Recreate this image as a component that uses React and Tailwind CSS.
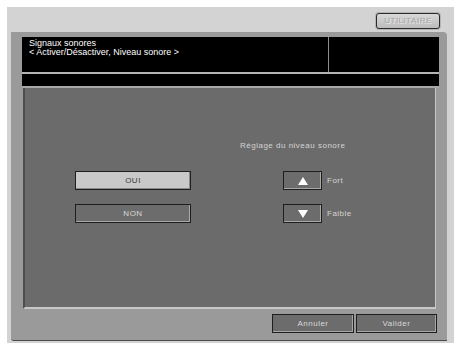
import React from "react";

const pixelFont = { fontFamily: '"Liberation Sans", Arial, sans-serif' };

const FlatButton = ({ children, light, className = "" }) => (
  <div
    className={
      "flex items-center justify-center border border-[#1e1e1e] text-[8px] tracking-[0.5px] " +
      (light
        ? "bg-[#c9c9c9] text-[#3a3a3a] shadow-[inset_-1px_-1px_0_#8a8a8a] "
        : "bg-[#6c6c6c] text-[#d8d8d8] shadow-[inset_-1px_-1px_0_#a8a8a8] ") +
      className
    }
  >
    {children}
  </div>
);

const ArrowButton = ({ up, label }) => (
  <div className="flex items-center gap-[5px]">
    <div className="flex h-[19px] w-[39px] items-center justify-center border border-[#1e1e1e] bg-[#6c6c6c] shadow-[inset_-1px_-1px_0_#a8a8a8]">
      <svg width="10" height="8" viewBox="0 0 10 8">
        <polygon points={up ? "5,0 10,8 0,8" : "0,0 10,0 5,8"} fill="#ffffff" />
      </svg>
    </div>
    <span className="text-[8px] tracking-[0.5px] text-[#d4d4d4]">{label}</span>
  </div>
);

export default function App() {
  return (
    <div className="h-[343px] w-[454px] bg-white pl-[7px] pt-[7px]" style={pixelFont}>
      <div className="flex h-[336px] w-[447px] flex-col bg-[#d3d3d3]">
        {/* top bar */}
        <div className="flex h-[25px] justify-end pr-[13px] pt-[5px]">
          <div className="h-[18px] w-[66px] rounded-[4px] bg-[#b4b4b4] p-[1px]">
            <div className="flex h-full w-full items-center justify-center rounded-[3px] border border-[#2a2a2a] bg-gradient-to-b from-[#d8d8d8] to-[#bcbcbc] text-[8px] tracking-[0.5px] text-[#a4a4a4] [text-shadow:1px_1px_0_#e8e8e8]">
              UTILITAIRE
            </div>
          </div>
        </div>

        {/* main panel */}
        <div className="ml-[4px] mr-[7px] flex h-[309px] flex-col rounded-tr-[4px] rounded-bl-[3px] border-b border-[#4a4a4a] bg-[#9a9a9a] pl-[11px] pr-[8px] pt-[5px]">
          {/* header */}
          <div className="flex h-[35px] bg-black">
            <div className="flex-1 border-r border-[#8c8c8c] pl-[7px] pt-[2px] text-[9px] leading-[9px] text-white">
              <div>Signaux sonores</div>
              <div>&lt; Activer/Désactiver, Niveau sonore &gt;</div>
            </div>
            <div className="w-[110px]" />
          </div>
          <div className="h-[2px] bg-[#b4b4b4]" />
          <div className="h-[12px] bg-black" />
          <div className="h-[2px] bg-[#a8a8a8]" />

          {/* content */}
          <div className="ml-[1px] mr-[3px] flex h-[221px] flex-col border-b-2 border-l-2 border-r border-b-[#c8c8c8] border-l-[#4e4e4e] border-r-[#c8c8c8] bg-[#6b6b6b] pt-[52px]">
            <div className="pl-[215px] text-[8px] tracking-[0.5px] text-[#d4d4d4]">
              Réglage du niveau sonore
            </div>
            <div className="mt-[19px] flex">
              <div className="ml-[50px] flex w-[116px] flex-col gap-[14px]">
                <FlatButton light className="h-[19px]">OUI</FlatButton>
                <FlatButton className="h-[19px]">NON</FlatButton>
              </div>
              <div className="ml-[92px] flex flex-col gap-[14px]">
                <ArrowButton up label="Fort" />
                <ArrowButton label="Faible" />
              </div>
            </div>
          </div>

          {/* footer */}
          <div className="mr-[2px] mt-[5px] flex justify-end gap-[2px]">
            <FlatButton className="h-[19px] w-[82px]">Annuler</FlatButton>
            <FlatButton className="h-[19px] w-[81px]">Valider</FlatButton>
          </div>
        </div>
      </div>
    </div>
  );
}
